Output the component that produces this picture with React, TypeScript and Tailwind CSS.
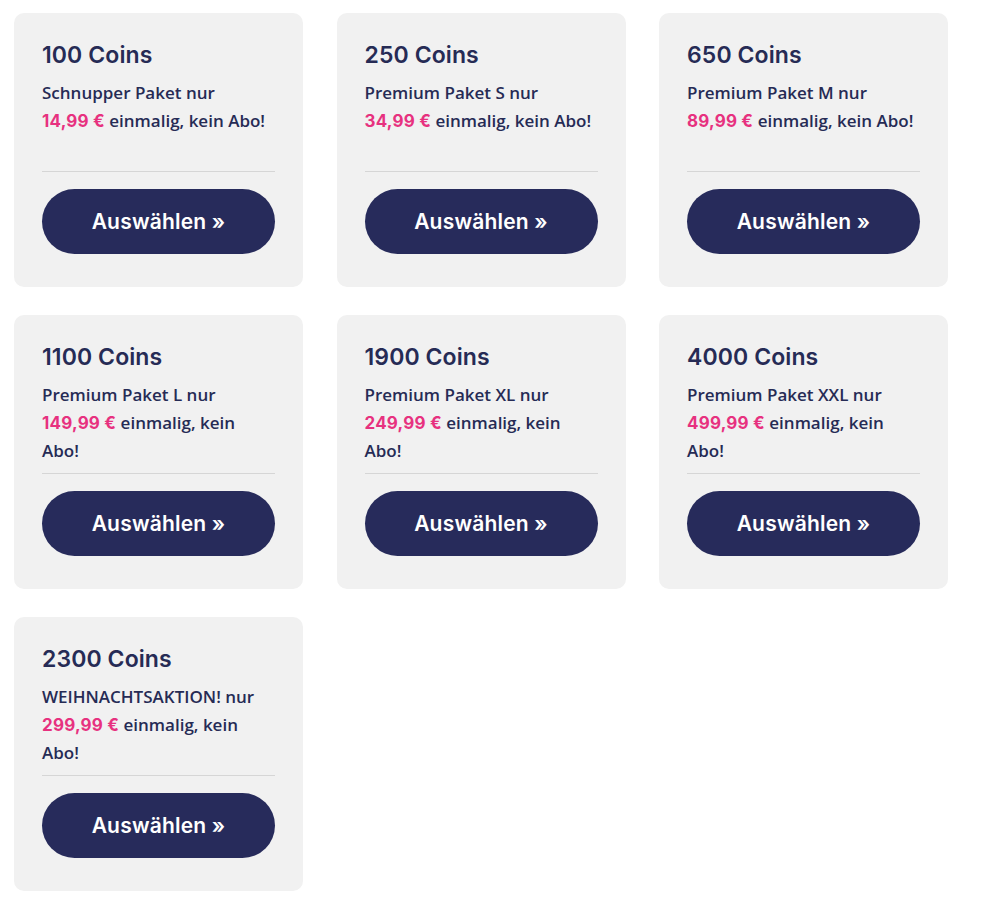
import React from "react";

type Pack = { coins: string; label: string; price: string; wrap?: boolean };

const packs: Pack[] = [
  { coins: "100 Coins", label: "Schnupper Paket nur", price: "14,99 €" },
  { coins: "250 Coins", label: "Premium Paket S nur", price: "34,99 €" },
  { coins: "650 Coins", label: "Premium Paket M nur", price: "89,99 €" },
  { coins: "1100 Coins", label: "Premium Paket L nur", price: "149,99 €", wrap: true },
  { coins: "1900 Coins", label: "Premium Paket XL nur", price: "249,99 €", wrap: true },
  { coins: "4000 Coins", label: "Premium Paket XXL nur", price: "499,99 €", wrap: true },
  { coins: "2300 Coins", label: "WEIHNACHTSAKTION! nur", price: "299,99 €", wrap: true },
];

function Card({ p }: { p: Pack }) {
  return (
    <div className="bg-[#f1f1f1] rounded-[10px] px-7 pt-[29px] pb-[33px] flex flex-col">
      <h3 className="text-[23px] leading-[26px] font-semibold text-[#262b55] font-['Inter',sans-serif] tracking-[0.1px]">
        {p.coins}
      </h3>
      <p className="mt-[11px] h-[84px] text-[17px] leading-[28px] font-semibold text-[#262b55] font-['Open_Sans',sans-serif]">
        {p.label}
        <br />
        <span className="text-[#e7317f] font-bold font-['Inter',sans-serif] tracking-[0.2px]">{p.price}</span>{" "}
        einmalig, kein{p.wrap ? <br /> : " "}Abo!
      </p>
      <div className="mt-2 h-px bg-[#d6d6d6]" />
      <button className="mt-[17px] h-[65px] w-full rounded-full bg-[#272b5b] text-white text-[21px] font-semibold font-['Inter',sans-serif] tracking-[0.2px]">
        Auswählen »
      </button>
    </div>
  );
}

export default function App() {
  return (
    <div className="bg-white min-h-[905px] w-[985px] pl-[14px] pt-[13px]">
      <div className="grid grid-cols-[289px_289px_289px] gap-x-[33.5px] gap-y-[28px]">
        {packs.map((p) => (
          <Card key={p.coins} p={p} />
        ))}
      </div>
    </div>
  );
}
